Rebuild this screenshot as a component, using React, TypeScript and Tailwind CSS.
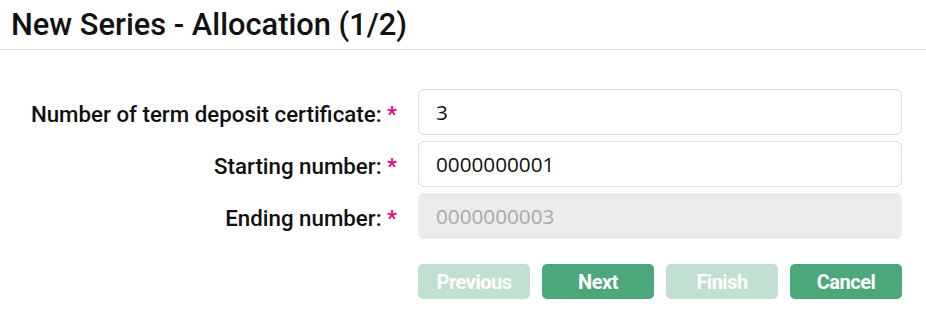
const labelFont = "font-['Roboto',sans-serif]";

function Field({ label, value, disabled }: { label: string; value: string; disabled?: boolean }) {
  return (
    <div className="flex items-center">
      <label className={`w-[397px] pt-[5px] text-right text-[22.3px] font-medium text-[#111] ${labelFont}`}>
        {label}: <span className="text-[#e6007e]">*</span>
      </label>
      <input
        readOnly
        disabled={disabled}
        value={value}
        className={`ml-[21px] h-[46px] w-[484px] rounded-[6px] border px-[17px] font-['Open_Sans',sans-serif] text-[20.7px] outline-none ${
          disabled
            ? 'border-[#ececec] bg-[#ececec] text-[#aaaaaa]'
            : 'border-[#dedede] bg-white text-[#111]'
        }`}
      />
    </div>
  );
}

export default function App() {
  const buttons = [
    { text: 'Previous', enabled: false },
    { text: 'Next', enabled: true },
    { text: 'Finish', enabled: false },
    { text: 'Cancel', enabled: true },
  ];

  return (
    <main className="h-[311px] w-[926px] bg-white">
      <header className="h-[50px] border-b border-[#e0e0e0] pl-[11px]">
        <h1 className={`pt-[6px] text-[30.8px] leading-[38px] font-medium text-[#111] ${labelFont}`}>
          New Series - Allocation (1/2)
        </h1>
      </header>

      <section className="mt-[39px] flex flex-col gap-[6px]">
        <Field label="Number of term deposit certificate" value="3" />
        <Field label="Starting number" value="0000000001" />
        <Field label="Ending number" value="0000000003" disabled />
      </section>

      <div className="ml-[418px] mt-[25px] grid w-[484px] grid-cols-4 gap-3">
        {buttons.map((b) => (
          <button
            key={b.text}
            disabled={!b.enabled}
            className={`h-[35px] rounded-[5px] text-[20px] font-bold text-white ${labelFont} tracking-[-0.5px] ${
              b.enabled ? 'bg-[#4ba87a]' : 'bg-[#c2e0d2]'
            }`}
          >
            {b.text}
          </button>
        ))}
      </div>
    </main>
  );
}
